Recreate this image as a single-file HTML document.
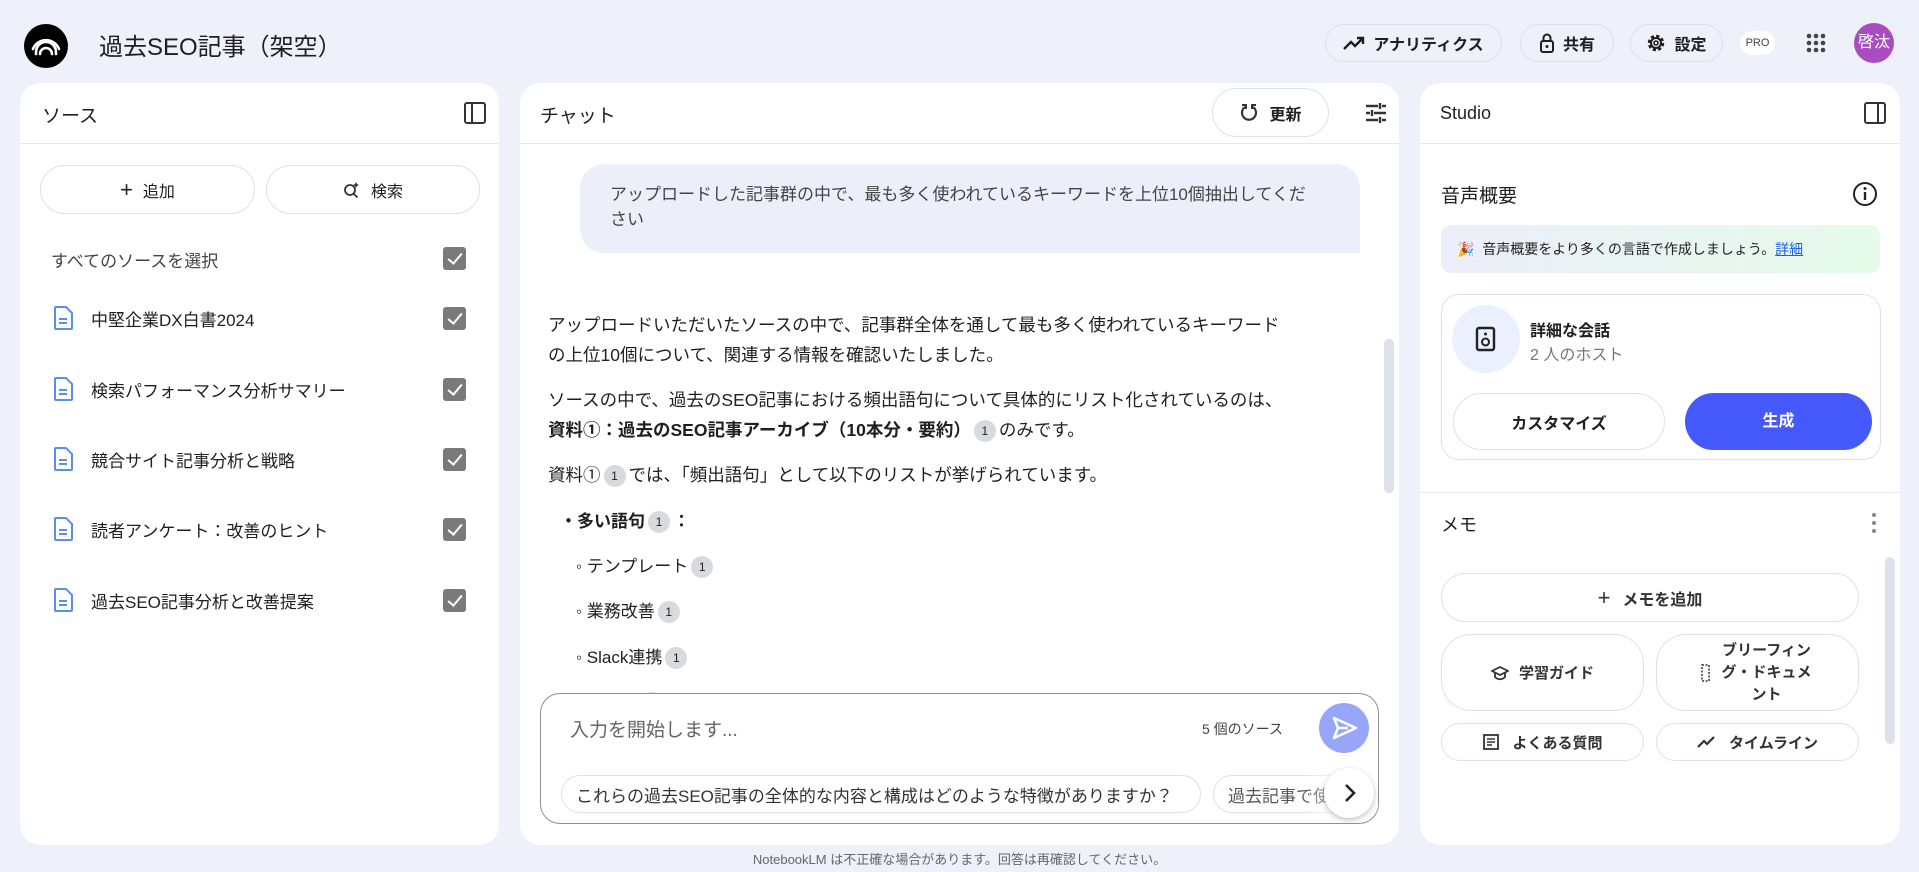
<!DOCTYPE html>
<html><head><meta charset="utf-8"><style>
*{box-sizing:border-box;margin:0;padding:0}
body{width:1919px;height:872px;background:#eef0fa;font-family:"Liberation Sans","Noto Sans CJK JP",sans-serif;color:#1f1f1f;position:relative;overflow:hidden}
.a{position:absolute}
.panel{position:absolute;top:83px;height:762px;background:#fff;border-radius:20px;overflow:hidden}
.ph{position:absolute;left:0;right:0;top:0;height:61px;border-bottom:1px solid #e3e5ef}
.pill{position:absolute;border:1px solid #dfe1ea;border-radius:30px;background:#fff;display:flex;align-items:center;justify-content:center;font-size:16px}
.hb{position:absolute;top:24px;height:38px;border:1px solid #dcdfe9;border-radius:20px;display:flex;align-items:center;justify-content:center;font-size:16px;font-weight:bold;gap:8px}
.chk{position:absolute;left:443px;width:23px;height:23px;background:#7a7a7a;border-radius:3px}
.chk:after{content:"";position:absolute;left:8px;top:3px;width:6px;height:12px;border:solid #fff;border-width:0 2px 2px 0;transform:rotate(40deg)}
.src{position:absolute;left:91px;font-size:17px}
.doc{position:absolute;left:54px;width:19px;height:24px}
.t{position:absolute;font-size:17px;white-space:nowrap}
.cit{display:inline-block;width:22px;height:22px;border-radius:11px;background:#d9dae0;font-size:12px;text-align:center;line-height:22px;vertical-align:1px;margin:0 3px;font-weight:normal}
</style></head><body>
<div class="a" style="left:24px;top:24px;width:44px;height:44px;border-radius:22px;background:#000">
<svg width="44" height="44" viewBox="0 0 44 44"><g fill="none" stroke="#fff" stroke-width="2.6" stroke-linecap="round"><path d="M12 30v-2a10 10 0 0 1 20 0v2"/><path d="M16 30a6 6 0 0 1 12 0"/><path d="M9 25a14 14 0 0 1 26 0"/></g></svg></div>
<div class="a" style="left:99px;top:27px;font-size:24px">過去SEO記事（架空）</div>
<div class="hb" style="left:1325px;width:177px"><svg width="22" height="16" viewBox="0 0 22 16"><path d="M1 14l7-7 4 4 8-8M14 3h6v6" fill="none" stroke="#1f1f1f" stroke-width="2.4"/></svg>アナリティクス</div>
<div class="hb" style="left:1520px;width:94px"><svg width="16" height="22" viewBox="0 0 16 22"><rect x="2" y="9" width="12" height="11" rx="2" fill="none" stroke="#1f1f1f" stroke-width="2"/><path d="M4.5 9V6a3.5 3.5 0 0 1 7 0v3" fill="none" stroke="#1f1f1f" stroke-width="2"/><circle cx="8" cy="14.5" r="1.5" fill="#1f1f1f"/></svg>共有</div>
<div class="hb" style="left:1630px;width:93px"><svg width="20" height="20" viewBox="0 0 20 20"><circle cx="10" cy="10" r="6.5" fill="none" stroke="#1f1f1f" stroke-width="3.5" stroke-dasharray="3 2.1"/><circle cx="10" cy="10" r="5" fill="none" stroke="#1f1f1f" stroke-width="2"/><circle cx="10" cy="10" r="2" fill="none" stroke="#1f1f1f" stroke-width="1.6"/></svg>設定</div>
<div class="a" style="left:1740px;top:31px;width:35px;height:24px;border-radius:12px;background:#fff;font-size:11px;color:#444;text-align:center;line-height:24px">PRO</div>
<svg class="a" style="left:1806px;top:33px" width="20" height="20"><g fill="#444"><circle cx="3" cy="3" r="2.3"/><circle cx="10" cy="3" r="2.3"/><circle cx="17" cy="3" r="2.3"/><circle cx="3" cy="10" r="2.3"/><circle cx="10" cy="10" r="2.3"/><circle cx="17" cy="10" r="2.3"/><circle cx="3" cy="17" r="2.3"/><circle cx="10" cy="17" r="2.3"/><circle cx="17" cy="17" r="2.3"/></g></svg>
<div class="a" style="left:1854px;top:23px;width:40px;height:40px;border-radius:20px;background:#a84cbf;color:#fff;font-size:16px;text-align:center;line-height:40px">啓汰</div>

<div class="panel" style="left:20px;width:479px">
<div class="ph"><div class="a" style="left:22px;top:18px;font-size:19px">ソース</div>
<svg class="a" style="left:443px;top:18px" width="24" height="24"><rect x="2" y="2" width="20" height="20" rx="2" fill="none" stroke="#333" stroke-width="2"/><path d="M9 2v20" stroke="#333" stroke-width="2"/></svg></div>
</div>
<div class="pill" style="left:40px;top:165px;width:215px;height:49px;gap:10px"><span style="font-size:22px;font-weight:300">+</span>追加</div>
<div class="pill" style="left:266px;top:165px;width:214px;height:49px;gap:10px"><svg width="18" height="18" viewBox="0 0 18 18"><circle cx="7" cy="9" r="5" fill="none" stroke="#333" stroke-width="1.8"/><path d="M10.5 12.5l4 4" stroke="#333" stroke-width="1.8"/><path d="M13 1l1 2 2 1-2 1-1 2-1-2-2-1 2-1z" fill="#333"/></svg>検索</div>
<div class="a" style="left:51px;top:247px;font-size:17px;color:#444">すべてのソースを選択</div>
<div class="chk" style="top:247px"></div>
<svg class="doc" style="top:306px" viewBox="0 0 19 24"><path d="M2 1h10l6 6v15a1 1 0 0 1-1 1H2a1 1 0 0 1-1-1V2a1 1 0 0 1 1-1z" fill="#fff" stroke="#5b8def" stroke-width="2"/><path d="M5 13h8M5 17h8" stroke="#5b8def" stroke-width="2"/></svg>
<div class="src" style="top:306px">中堅企業DX白書2024</div><div class="chk" style="top:307px"></div>
<svg class="doc" style="top:377px" viewBox="0 0 19 24"><path d="M2 1h10l6 6v15a1 1 0 0 1-1 1H2a1 1 0 0 1-1-1V2a1 1 0 0 1 1-1z" fill="#fff" stroke="#5b8def" stroke-width="2"/><path d="M5 13h8M5 17h8" stroke="#5b8def" stroke-width="2"/></svg>
<div class="src" style="top:377px">検索パフォーマンス分析サマリー</div><div class="chk" style="top:378px"></div>
<svg class="doc" style="top:447px" viewBox="0 0 19 24"><path d="M2 1h10l6 6v15a1 1 0 0 1-1 1H2a1 1 0 0 1-1-1V2a1 1 0 0 1 1-1z" fill="#fff" stroke="#5b8def" stroke-width="2"/><path d="M5 13h8M5 17h8" stroke="#5b8def" stroke-width="2"/></svg>
<div class="src" style="top:447px">競合サイト記事分析と戦略</div><div class="chk" style="top:448px"></div>
<svg class="doc" style="top:517px" viewBox="0 0 19 24"><path d="M2 1h10l6 6v15a1 1 0 0 1-1 1H2a1 1 0 0 1-1-1V2a1 1 0 0 1 1-1z" fill="#fff" stroke="#5b8def" stroke-width="2"/><path d="M5 13h8M5 17h8" stroke="#5b8def" stroke-width="2"/></svg>
<div class="src" style="top:517px">読者アンケート：改善のヒント</div><div class="chk" style="top:518px"></div>
<svg class="doc" style="top:588px" viewBox="0 0 19 24"><path d="M2 1h10l6 6v15a1 1 0 0 1-1 1H2a1 1 0 0 1-1-1V2a1 1 0 0 1 1-1z" fill="#fff" stroke="#5b8def" stroke-width="2"/><path d="M5 13h8M5 17h8" stroke="#5b8def" stroke-width="2"/></svg>
<div class="src" style="top:588px">過去SEO記事分析と改善提案</div><div class="chk" style="top:589px"></div>

<div class="panel" style="left:520px;width:879px">
<div class="ph"><div class="a" style="left:20px;top:18px;font-size:19px">チャット</div>
<svg class="a" style="left:844px;top:18px" width="24" height="24"><g stroke="#333" stroke-width="2.4"><path d="M2 5h12M18 5h4M2 12h4M10 12h12M2 19h12M18 19h4"/><path d="M16 2v6M8 9v6M16 16v6"/></g></svg></div>
<div class="a" style="left:0;right:0;top:61px;bottom:0;overflow:hidden">
<div class="a" style="left:60px;top:20px;width:780px;height:89px;background:#eceef9;border-radius:24px 24px 0 24px"></div>
<div class="t" style="left:90px;top:38px;color:#444;font-size:17px;line-height:25px;white-space:normal;width:705px">アップロードした記事群の中で、最も多く使われているキーワードを上位10個抽出してください</div>
<div class="t" style="left:28px;top:168px;font-size:17.5px">アップロードいただいたソースの中で、記事群全体を通して最も多く使われているキーワード</div>
<div class="t" style="left:28px;top:198px;font-size:17.5px">の上位10個について、関連する情報を確認いたしました。</div>
<div class="t" style="left:28px;top:243px;font-size:17.5px">ソースの中で、過去のSEO記事における頻出語句について具体的にリスト化されているのは、</div>
<div class="t" style="left:28px;top:273px;font-weight:bold;font-size:17.5px">資料①：過去のSEO記事アーカイブ（10本分・要約）<span class="cit">1</span><span style="font-weight:normal">のみです。</span></div>
<div class="t" style="left:28px;top:318px;font-size:17.5px">資料①<span class="cit">1</span>では、「頻出語句」として以下のリストが挙げられています。</div>
<div class="t" style="left:40px;top:363px;font-weight:bold">・多い語句<span class="cit">1</span>：</div>
<div class="t" style="left:56px;top:408px">◦ テンプレート<span class="cit">1</span></div>
<div class="t" style="left:56px;top:453px">◦ 業務改善<span class="cit">1</span></div>
<div class="t" style="left:56px;top:499px">◦ Slack連携<span class="cit">1</span></div>
<div class="t" style="left:56px;top:544px">◦ 自動化<span class="cit">1</span></div>
<div class="a" style="left:864px;top:195px;width:10px;height:154px;border-radius:5px;background:#dde1ea"></div>
</div>
</div>
<div class="pill" style="left:1212px;top:88px;width:117px;height:49px;gap:10px;font-weight:bold"><svg width="20" height="20" viewBox="0 0 20 20"><path d="M6 4a7 7 0 1 0 8 0" fill="none" stroke="#333" stroke-width="2.2"/><path d="M3 2h4v4M17 2h-4v4" fill="none" stroke="#333" stroke-width="2"/></svg>更新</div>
<div class="a" style="left:540px;top:693px;width:839px;height:131px;border:1px solid #8e8f96;border-radius:20px;background:#fff;overflow:hidden">
<div class="a" style="left:29px;top:21px;font-size:19px;color:#666">入力を開始します...</div>
<div class="a" style="left:661px;top:25px;font-size:14px;color:#444">5 個のソース</div>
<div class="a" style="left:778px;top:9px;width:50px;height:50px;border-radius:25px;background:#98a6fa"><svg width="50" height="50"><path d="M15 15l22 10-22 10 4-10z" fill="none" stroke="#fff" stroke-width="2.5" stroke-linejoin="round"/><path d="M19 25h10" stroke="#fff" stroke-width="2.5"/></svg></div>
<div class="pill" style="left:20px;top:81px;width:640px;height:38px;font-size:17px;color:#333;justify-content:flex-start;padding-left:14px">これらの過去SEO記事の全体的な内容と構成はどのような特徴がありますか？</div>
<div class="pill" style="left:672px;top:81px;width:180px;height:38px;justify-content:flex-start;padding-left:14px;font-size:17px;color:#555">過去記事で使</div>
<div class="a" style="left:760px;top:81px;width:90px;height:38px;background:linear-gradient(90deg,rgba(255,255,255,0),#fff 60%)"></div>
<div class="a" style="left:783px;top:74px;width:50px;height:50px;border-radius:25px;background:#fff;box-shadow:0 2px 6px rgba(0,0,0,.25)"><svg width="50" height="50"><path d="M22 17l8 8-8 8" fill="none" stroke="#222" stroke-width="2.6"/></svg></div>
</div>

<div class="panel" style="left:1420px;width:480px">
<div class="ph"><div class="a" style="left:20px;top:20px;font-size:18px">Studio</div>
<svg class="a" style="left:443px;top:18px" width="24" height="24"><rect x="2" y="2" width="20" height="20" rx="2" fill="none" stroke="#333" stroke-width="2"/><path d="M15 2v20" stroke="#333" stroke-width="2"/></svg></div>
<div class="a" style="left:21px;top:98px;font-size:19px">音声概要</div>
<svg class="a" style="left:432px;top:98px" width="26" height="26"><circle cx="13" cy="13" r="11" fill="none" stroke="#222" stroke-width="2"/><path d="M13 11v8" stroke="#222" stroke-width="2.4"/><circle cx="13" cy="7.5" r="1.5" fill="#222"/></svg>
<div class="a" style="left:21px;top:142px;width:439px;height:48px;border-radius:10px;background:linear-gradient(90deg,#eceef9,#e6fbea);font-size:14px;line-height:48px;padding-left:16px">🎉&nbsp; 音声概要をより多くの言語で作成しましょう。<span style="color:#1a5de8;text-decoration:underline">詳細</span></div>
<div class="a" style="left:21px;top:211px;width:440px;height:166px;border:1px solid #dfe1ea;border-radius:18px">
<div class="a" style="left:10px;top:10px;width:68px;height:68px;border-radius:34px;background:#eaf0fd"><svg width="68" height="68"><rect x="25" y="23" width="17" height="22" rx="2" fill="none" stroke="#222" stroke-width="2.4"/><circle cx="33.5" cy="37" r="3.5" fill="none" stroke="#222" stroke-width="2"/><circle cx="33.5" cy="29" r="1.5" fill="#222"/></svg></div>
<div class="a" style="left:88px;top:22px;font-size:16px;font-weight:bold">詳細な会話</div>
<div class="a" style="left:88px;top:46px;font-size:16px;color:#777">2 人のホスト</div>
<div class="pill" style="left:11px;top:98px;width:212px;height:57px;font-weight:bold">カスタマイズ</div>
<div class="a" style="left:243px;top:98px;width:187px;height:57px;border-radius:29px;background:#4559fb;color:#fff;font-weight:bold;font-size:16px;text-align:center;line-height:57px">生成</div>
</div>
<div class="a" style="left:0;right:0;top:409px;height:1px;background:#e3e5ef"></div>
<div class="a" style="left:21px;top:428px;font-size:18px">メモ</div>
<svg class="a" style="left:450px;top:428px" width="8" height="24"><g fill="#888"><circle cx="4" cy="4" r="2"/><circle cx="4" cy="12" r="2"/><circle cx="4" cy="20" r="2"/></g></svg>
<div class="pill" style="left:21px;top:490px;width:418px;height:49px;gap:12px;font-weight:bold;color:#333"><span style="font-size:22px;font-weight:300">+</span>メモを追加</div>
<div class="pill" style="left:21px;top:551px;width:203px;height:77px;gap:10px;font-weight:bold;font-size:15px;color:#333"><svg width="18" height="18"><path d="M1 7l8-4 8 4-8 4z M4 9v4c3 3 7 3 10 0V9" fill="none" stroke="#333" stroke-width="1.8"/></svg>学習ガイド</div>
<div class="pill" style="left:236px;top:551px;width:203px;height:77px;gap:8px;font-weight:bold;font-size:15px;color:#333;line-height:22px"><svg width="10" height="18"><rect x="1" y="1" width="7" height="16" fill="none" stroke="#333" stroke-width="1.5" stroke-dasharray="2 1.5"/></svg><span style="text-align:center;width:96px">ブリーフィング・ドキュメント</span></div>
<div class="pill" style="left:21px;top:640px;width:203px;height:38px;gap:12px;font-weight:bold;font-size:15px;color:#333"><svg width="18" height="18"><rect x="2" y="2" width="14" height="14" fill="none" stroke="#333" stroke-width="1.8"/><path d="M5 6h8M5 9h8M5 12h5" stroke="#333" stroke-width="1.5"/></svg>よくある質問</div>
<div class="pill" style="left:236px;top:640px;width:203px;height:38px;gap:12px;font-weight:bold;font-size:15px;color:#333"><svg width="20" height="14"><path d="M1 12l6-6 3 3 7-7" fill="none" stroke="#333" stroke-width="2.2"/></svg>タイムライン</div>
<div class="a" style="left:465px;top:474px;width:10px;height:187px;border-radius:5px;background:#dde1ea"></div>
</div>

<div class="a" style="left:0;width:1919px;top:849px;text-align:center;font-size:13px;color:#666">NotebookLM は不正確な場合があります。回答は再確認してください。</div>
</body></html>
